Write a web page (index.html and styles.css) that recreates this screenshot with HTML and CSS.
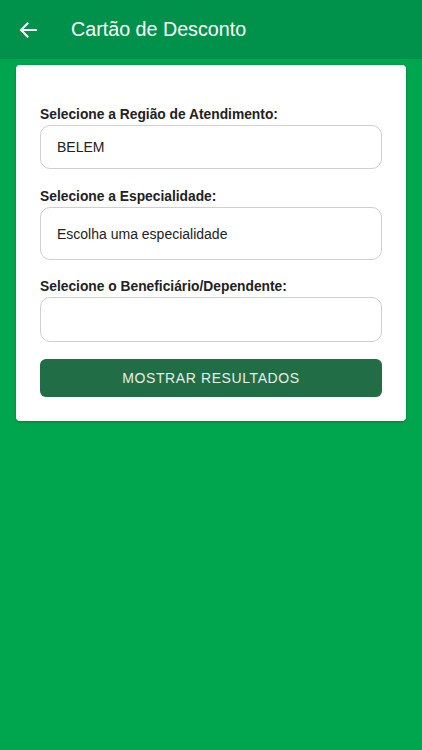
FILE: index.html
```html
<!DOCTYPE html>
<html lang="pt">

<head>
    <meta charset="UTF-8">
    <meta name="viewport" content="width=device-width, initial-scale=1.0">
    <title>Cartão de Desconto</title>
    <link rel="stylesheet" href="styles.css">
</head>

<body>
    <header class="topbar">
        <button class="back" aria-label="Voltar">
            <svg width="18" height="16" viewBox="0 0 18 16">
                <path d="M17 8H2.5M8.5 1.5L2 8l6.5 6.5" fill="none" stroke="#fff" stroke-width="2" stroke-linecap="square"/>
            </svg>
        </button>
        <h1>Cartão de Desconto</h1>
    </header>

    <main class="content">
        <form class="card">
            <label class="field-label">Selecione a Região de Atendimento:</label>
            <div class="select">BELEM</div>

            <label class="field-label">Selecione a Especialidade:</label>
            <div class="select tall">Escolha uma especialidade</div>

            <label class="field-label">Selecione o Beneficiário/Dependente:</label>
            <div class="select last"></div>

            <button type="button" class="submit">MOSTRAR RESULTADOS</button>
        </form>
    </main>
</body>

</html>
```

FILE: styles.css
```css
body {
    font-family: 'Liberation Sans', Arial, sans-serif;
    margin: 0;
    padding: 0;
    min-height: 100vh;
    background-color: #00a64e;
}

.topbar {
    height: 59px;
    background-color: #00924a;
    display: flex;
    align-items: center;
    padding: 0 0 0 19px;
    box-sizing: border-box;
}

.back {
    background: none;
    border: none;
    padding: 0;
    width: 18px;
    height: 16px;
    display: flex;
    margin-top: 1px;
}

.topbar h1 {
    margin: 0 0 0 34px;
    color: #fff;
    font-size: 19.7px;
    font-weight: normal;
}

.content {
    padding: 6px 16px;
}

.card {
    background: #ffffff;
    border-radius: 4px;
    box-shadow: 0 1px 3px rgba(0, 0, 0, 0.25);
    padding: 41px 24px 24px;
    display: flex;
    flex-direction: column;
}

.field-label {
    font-size: 13.8px;
    line-height: 17px;
    font-weight: bold;
    color: #222;
    margin-bottom: 2px;
}

.select {
    height: 44px;
    border: 1px solid #cfcfcf;
    border-radius: 10px;
    box-sizing: border-box;
    display: flex;
    align-items: center;
    padding: 0 16px;
    font-size: 14px;
    color: #222;
    margin-bottom: 19px;
}

.select.tall {
    height: 53px;
    margin-bottom: 18px;
}

.select.last {
    height: 45px;
    margin-bottom: 17px;
}

.submit {
    height: 38px;
    background-color: #216e46;
    color: #e6efe9;
    border: none;
    border-radius: 6px;
    font-family: inherit;
    font-size: 14px;
    letter-spacing: 0.6px;
}
```
